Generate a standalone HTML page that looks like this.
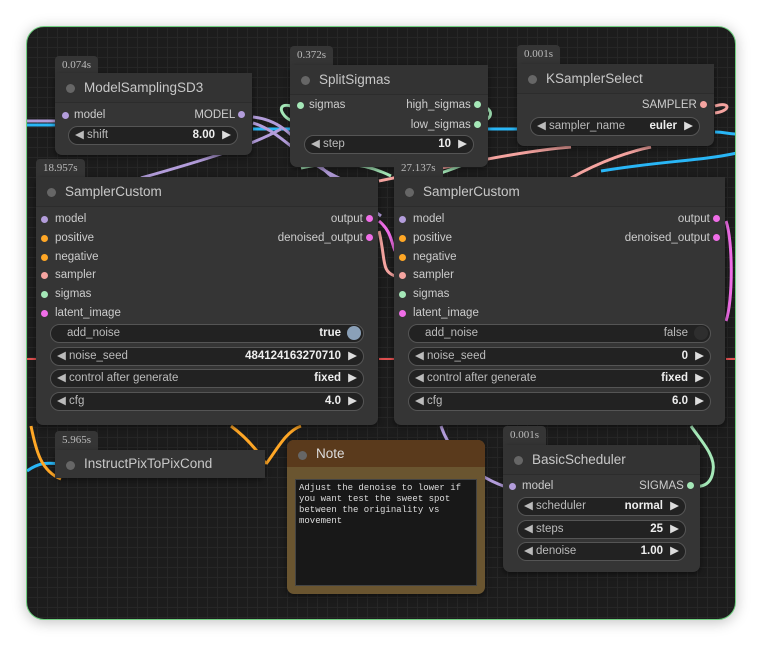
<!DOCTYPE html>
<html><head><meta charset="utf-8"><style>
*{box-sizing:border-box;margin:0;padding:0}
body{width:762px;height:647px;background:#fff;font-family:"Liberation Sans",Arial,sans-serif;position:relative;overflow:hidden}
#cv{position:absolute;left:26px;top:26px;width:710px;height:594px;border-radius:18px;border:1px solid #6fcf7f;overflow:hidden;
background-color:#1c1c1c;background-image:linear-gradient(#262626 1px,transparent 1px),linear-gradient(90deg,#262626 1px,transparent 1px);background-size:10px 10px;box-shadow:0 2px 14px rgba(0,0,0,.25)}
.n{position:absolute;background:#353535;border-radius:7px;box-shadow:0 2px 6px rgba(0,0,0,.5)}
.t{height:30px;border-bottom:1px solid #2c2c2c;color:#c8c8c8;font-size:13.5px;line-height:30px;padding-left:29px;position:relative;background:#333}
.t:before{content:"";position:absolute;left:11px;top:11px;width:9px;height:9px;border-radius:50%;background:#666}
.b{position:absolute;background:#353535;color:#bbb;font-family:"Liberation Serif",serif;font-size:11px;padding:3px 7px 0;border-radius:4px 4px 0 0;height:19px}
.s{position:absolute;font-size:11.5px;color:#ccc;height:14px;line-height:14px}
.d{position:absolute;width:7px;height:7px;border-radius:50%;top:4px}
.w{position:absolute;height:19px;border:1px solid #555;border-radius:10px;background:#222;font-size:11.5px;color:#bbb;line-height:17px}
.w .l{position:absolute;left:6px}
.w .v{position:absolute;right:22px;color:#eee;font-weight:bold}
.w .r{position:absolute;right:6px;color:#ddd}
svg{position:absolute;left:0;top:0}
</style></head><body>
<div id="cv">
<svg width="710" height="594" fill="none" stroke-width="3">
<g transform="translate(-26,-26)">
<path d="M26 120 H60" stroke="#b39ddb"/>
<path d="M26 124 H60" stroke="#29b6f6"/>
<path d="M252 128 H520" stroke="#29b6f6"/>
<path d="M714 131 C725 131 725 133 736 133" stroke="#29b6f6"/>
<path d="M600 170 C660 160 700 160 736 152" stroke="#29b6f6"/>
<path d="M252 116 C290 120 300 150 330 175 C340 185 360 200 380 215" stroke="#b39ddb"/>
<path d="M252 122 C280 130 300 160 340 178" stroke="#b39ddb"/>
<path d="M140 177 C200 160 250 145 280 128" stroke="#b39ddb"/>
<path d="M290 105 C270 100 285 125 300 120" stroke="#a5e8b8"/>
<path d="M300 167 C330 160 360 160 390 175" stroke="#a5e8b8"/>
<path d="M480 105 C495 108 490 120 480 120" stroke="#a5e8b8"/>
<path d="M470 160 C450 170 420 178 400 185" stroke="#a5e8b8"/>
<path d="M714 105 C730 100 730 110 714 112" stroke="#f5a4a0"/>
<path d="M378 180 C450 165 520 150 570 146" stroke="#f5a4a0"/>
<path d="M570 177 C600 160 630 150 650 146" stroke="#f5a4a0"/>
<path d="M26 358 H36 M378 358 H394 M725 358 H736" stroke="#e05050" stroke-width="2"/>
<path d="M378 230 C385 260 380 270 394 275" stroke="#f5a4a0"/>
<path d="M725 220 C732 240 732 300 725 320" stroke="#f06ee8"/>
<path d="M378 220 C390 230 390 240 394 250" stroke="#f06ee8"/>
<path d="M26 470 C40 460 50 462 60 463" stroke="#29b6f6"/>
<path d="M30 425 C35 450 40 470 60 478" stroke="#ffa726"/>
<path d="M230 425 C250 440 260 455 265 463" stroke="#ffa726"/>
<path d="M265 463 C275 450 285 430 300 425" stroke="#ffa726"/>
<path d="M440 425 C445 440 460 470 505 486" stroke="#b39ddb"/>
<path d="M690 425 C700 440 715 455 712 470 C710 485 700 486 690 486" stroke="#a5e8b8"/>
</g>
</svg>
</div>

<div class="b" style="left:55px;top:56px">0.074s</div>
<div class="n" style="left:55px;top:73px;width:197px;height:82px">
<div class="t">ModelSamplingSD3</div>
<div class="s" style="left:7px;top:35px"><span class="d" style="left:0;background:#b39ddb"></span><span style="margin-left:12px">model</span></div>
<div class="s" style="right:7px;top:35px">MODEL <span class="d" style="right:0;position:relative;display:inline-block;top:0;background:#b39ddb"></span></div>
<div class="w" style="left:13px;top:53px;width:170px"><span class="l">◀ shift</span><span class="v">8.00</span><span class="r">▶</span></div>
</div>

<div class="b" style="left:290px;top:46px">0.372s</div>
<div class="n" style="left:290px;top:65px;width:198px;height:102px">
<div class="t">SplitSigmas</div>
<div class="s" style="left:7px;top:33px"><span class="d" style="left:0;background:#a5e8b8"></span><span style="margin-left:12px">sigmas</span></div>
<div class="s" style="right:7px;top:33px">high_sigmas <span class="d" style="position:relative;display:inline-block;top:0;background:#a5e8b8"></span></div>
<div class="s" style="right:7px;top:53px">low_sigmas <span class="d" style="position:relative;display:inline-block;top:0;background:#a5e8b8"></span></div>
<div class="w" style="left:14px;top:70px;width:170px"><span class="l">◀ step</span><span class="v">10</span><span class="r">▶</span></div>
</div>

<div class="b" style="left:517px;top:45px">0.001s</div>
<div class="n" style="left:517px;top:64px;width:197px;height:82px">
<div class="t">KSamplerSelect</div>
<div class="s" style="right:7px;top:34px">SAMPLER <span class="d" style="position:relative;display:inline-block;top:0;background:#f5a4a0"></span></div>
<div class="w" style="left:13px;top:53px;width:170px"><span class="l">◀ sampler_name</span><span class="v">euler</span><span class="r">▶</span></div>
</div>

<div class="b" style="left:36px;top:159px">18.957s</div>
<div class="n" style="left:36px;top:177px;width:342px;height:248px">
<div class="t">SamplerCustom</div>
<div class="s" style="left:5px;top:35px"><span class="d" style="left:0;background:#b39ddb"></span><span style="margin-left:14px">model</span></div>
<div class="s" style="left:5px;top:54px"><span class="d" style="left:0;background:#ffa726"></span><span style="margin-left:14px">positive</span></div>
<div class="s" style="left:5px;top:73px"><span class="d" style="left:0;background:#ffa726"></span><span style="margin-left:14px">negative</span></div>
<div class="s" style="left:5px;top:91px"><span class="d" style="left:0;background:#f5a4a0"></span><span style="margin-left:14px">sampler</span></div>
<div class="s" style="left:5px;top:110px"><span class="d" style="left:0;background:#a5e8b8"></span><span style="margin-left:14px">sigmas</span></div>
<div class="s" style="left:5px;top:129px"><span class="d" style="left:0;background:#f06ee8"></span><span style="margin-left:14px">latent_image</span></div>
<div class="s" style="right:5px;top:35px">output <span class="d" style="position:relative;display:inline-block;top:0;background:#f06ee8"></span></div>
<div class="s" style="right:5px;top:54px">denoised_output <span class="d" style="position:relative;display:inline-block;top:0;background:#f06ee8"></span></div>
<div class="w" style="left:14px;top:147px;width:314px"><span class="l" style="left:16px">add_noise</span><span class="v" style="right:22px">true</span><span style="position:absolute;right:2px;top:1px;width:14px;height:14px;border-radius:50%;background:#8aa0b8"></span></div>
<div class="w" style="left:14px;top:170px;width:314px"><span class="l">◀ noise_seed</span><span class="v">484124163270710</span><span class="r">▶</span></div>
<div class="w" style="left:14px;top:192px;width:314px"><span class="l">◀ control after generate</span><span class="v">fixed</span><span class="r">▶</span></div>
<div class="w" style="left:14px;top:215px;width:314px"><span class="l">◀ cfg</span><span class="v">4.0</span><span class="r">▶</span></div>
</div>

<div class="b" style="left:394px;top:159px">27.137s</div>
<div class="n" style="left:394px;top:177px;width:331px;height:248px">
<div class="t">SamplerCustom</div>
<div class="s" style="left:5px;top:35px"><span class="d" style="left:0;background:#b39ddb"></span><span style="margin-left:14px">model</span></div>
<div class="s" style="left:5px;top:54px"><span class="d" style="left:0;background:#ffa726"></span><span style="margin-left:14px">positive</span></div>
<div class="s" style="left:5px;top:73px"><span class="d" style="left:0;background:#ffa726"></span><span style="margin-left:14px">negative</span></div>
<div class="s" style="left:5px;top:91px"><span class="d" style="left:0;background:#f5a4a0"></span><span style="margin-left:14px">sampler</span></div>
<div class="s" style="left:5px;top:110px"><span class="d" style="left:0;background:#a5e8b8"></span><span style="margin-left:14px">sigmas</span></div>
<div class="s" style="left:5px;top:129px"><span class="d" style="left:0;background:#f06ee8"></span><span style="margin-left:14px">latent_image</span></div>
<div class="s" style="right:5px;top:35px">output <span class="d" style="position:relative;display:inline-block;top:0;background:#f06ee8"></span></div>
<div class="s" style="right:5px;top:54px">denoised_output <span class="d" style="position:relative;display:inline-block;top:0;background:#f06ee8"></span></div>
<div class="w" style="left:14px;top:147px;width:303px"><span class="l" style="left:16px">add_noise</span><span class="v" style="right:22px;font-weight:normal;color:#bbb">false</span><span style="position:absolute;right:2px;top:1px;width:14px;height:14px;border-radius:50%;background:#2e2e2e"></span></div>
<div class="w" style="left:14px;top:170px;width:303px"><span class="l">◀ noise_seed</span><span class="v">0</span><span class="r">▶</span></div>
<div class="w" style="left:14px;top:192px;width:303px"><span class="l">◀ control after generate</span><span class="v">fixed</span><span class="r">▶</span></div>
<div class="w" style="left:14px;top:215px;width:303px"><span class="l">◀ cfg</span><span class="v">6.0</span><span class="r">▶</span></div>
</div>

<div class="b" style="left:55px;top:431px">5.965s</div>
<div class="n" style="left:55px;top:450px;width:210px;height:28px;border-radius:7px">
<div class="t" style="height:28px;line-height:28px;border:0;background:#353535">InstructPixToPixCond</div>
</div>

<div class="n" style="left:287px;top:440px;width:198px;height:154px;background:#6a5530">
<div class="t" style="background:#5a3a1c;border:0;height:27px;line-height:27px;color:#ddd;border-radius:7px 7px 0 0">Note</div>
<div style="position:absolute;left:8px;top:39px;width:182px;height:107px;background:#181818;border:1px solid #444;color:#ddd;font-family:'Liberation Mono',monospace;font-size:9px;line-height:11px;padding:3px 3px">Adjust the denoise to lower if you want test the sweet spot between the originality vs movement</div>
</div>

<div class="b" style="left:503px;top:426px">0.001s</div>
<div class="n" style="left:503px;top:445px;width:197px;height:127px">
<div class="t">BasicScheduler</div>
<div class="s" style="left:6px;top:34px"><span class="d" style="left:0;background:#b39ddb"></span><span style="margin-left:13px">model</span></div>
<div class="s" style="right:6px;top:34px">SIGMAS <span class="d" style="position:relative;display:inline-block;top:0;background:#a5e8b8"></span></div>
<div class="w" style="left:14px;top:52px;width:169px"><span class="l">◀ scheduler</span><span class="v">normal</span><span class="r">▶</span></div>
<div class="w" style="left:14px;top:75px;width:169px"><span class="l">◀ steps</span><span class="v">25</span><span class="r">▶</span></div>
<div class="w" style="left:14px;top:97px;width:169px"><span class="l">◀ denoise</span><span class="v">1.00</span><span class="r">▶</span></div>
</div>
</body></html>
